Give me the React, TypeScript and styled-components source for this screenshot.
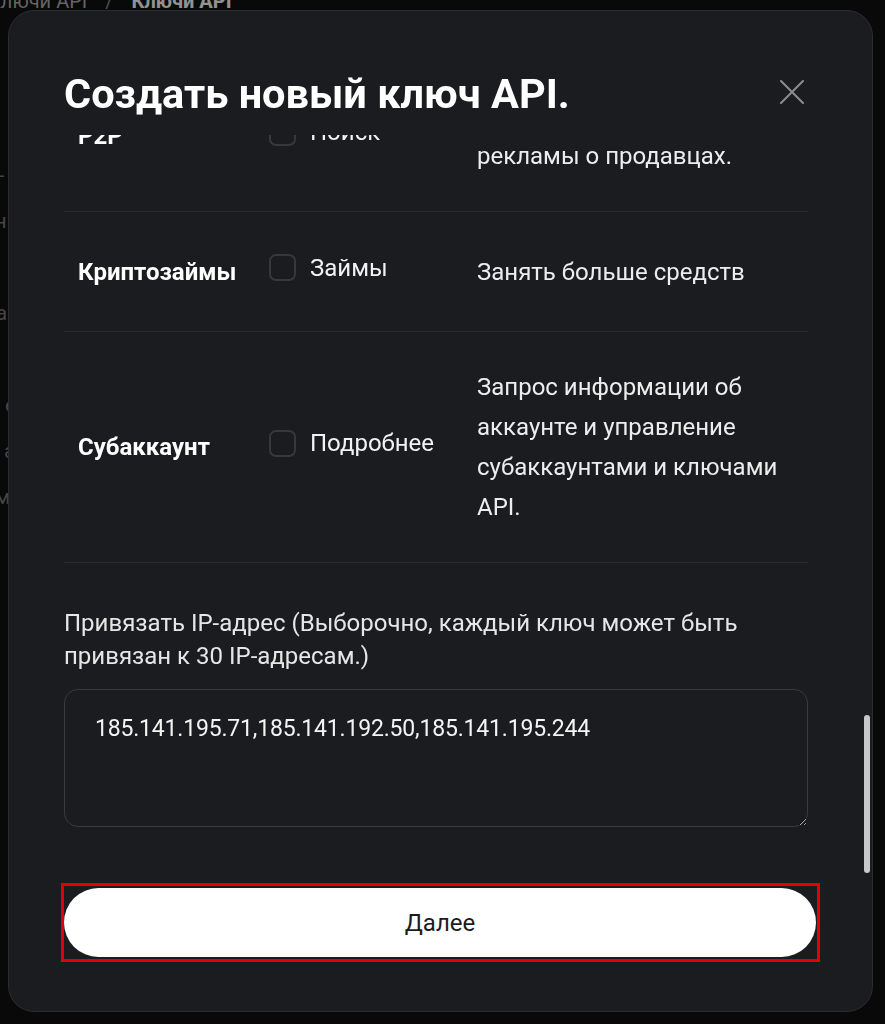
import React from "react";
import styled, { createGlobalStyle } from "styled-components";

const GlobalStyle = createGlobalStyle`
  html, body {
    margin: 0;
    padding: 0;
    background: #0e0e0f;
    color-scheme: dark;
  }
  body {
    font-family: Roboto, "Noto Sans", sans-serif;
    -webkit-font-smoothing: antialiased;
  }
`;

type Permission = {
  title: string;
  option: string;
  text: React.ReactNode;
};

const permissions: Permission[] = [
  {
    title: "P2P",
    option: "Поиск",
    text: (
      <>
        Просмотр объявлений и<br />
        рекламы о продавцах.
      </>
    ),
  },
  { title: "Криптозаймы", option: "Займы", text: "Занять больше средств" },
  {
    title: "Субаккаунт",
    option: "Подробнее",
    text: "Запрос информации об аккаунте и управление субаккаунтами и ключами API.",
  },
];

const backLines = [
  "Ограничения по IP-адресам для ключей API",
  "Выберите разрешения для вашего ключа API",
  "Чтение ",
  "Торговля спот и маржинальная торговля",
  "Деривативы и бессрочные контракты",
  "Доступ к вашим средствам на балансе",
  "Вывод средств ограничен белым списком",
  "Управление ключами и субаккаунтами",
];

export default function App() {
  return (
    <>
      <GlobalStyle />
      <Page>
        <Breadcrumb>
          <span>Ключи API</span>
          <Sep>/</Sep>
          <b>Ключи API</b>
        </Breadcrumb>
        <BackList>
          {backLines.map((l, i) => (
            <BackLine key={i}>{l}</BackLine>
          ))}
        </BackList>
      </Page>

      <Backdrop>
        <Modal>
          <Header>
            <Title>Создать новый ключ API.</Title>
            <Close aria-label="Закрыть">
              <svg width="24" height="24" viewBox="0 0 24 24">
                <path
                  d="M1 1L23 23M23 1L1 23"
                  stroke="#8b8c8f"
                  strokeWidth="2"
                  strokeLinecap="round"
                />
              </svg>
            </Close>
          </Header>

          <Body>
            {permissions.map((p) => (
              <Row key={p.title}>
                <RowTitle>{p.title}</RowTitle>
                <Check>
                  <Box />
                  <span>{p.option}</span>
                </Check>
                <RowText>{p.text}</RowText>
              </Row>
            ))}

            <IpLabel>
              Привязать IP-адрес (Выборочно, каждый ключ может быть привязан к 30
              IP-адресам.)
            </IpLabel>
            <IpArea
              readOnly
              value="185.141.195.71,185.141.192.50,185.141.195.244"
            />
          </Body>

          <Footer>
            <Highlight>
              <NextButton>Далее</NextButton>
            </Highlight>
          </Footer>

          <Thumb />
        </Modal>
      </Backdrop>
    </>
  );
}

const Page = styled.div`
  height: 1024px;
  overflow: hidden;
  color: #6a6a6a;
`;
const Breadcrumb = styled.div`
  display: flex;
  gap: 18px;
  margin: -11px 0 0 -12px;
  font-size: 20px;
  color: #9a9a9a;
  b {
    color: #e0e0e0;
  }
`;
const Sep = styled.span`
  color: #777;
`;
const BackList = styled.div`
  display: flex;
  flex-direction: column;
  gap: 22px;
  margin-top: 150px;
`;
const BackLine = styled.div`
  font-size: 21px;
  white-space: nowrap;
  margin-left: -320px;
  letter-spacing: 8px;
`;

const Backdrop = styled.div`
  position: fixed;
  inset: 0;
  background: rgba(0, 0, 0, 0.35);
  display: flex;
`;
const Modal = styled.div`
  position: relative;
  box-sizing: border-box;
  margin: 10px 12px 12px 8px;
  flex: 1;
  display: flex;
  flex-direction: column;
  background: #1b1c1f;
  border: 1px solid #2c2d31;
  border-radius: 26px;
  overflow: hidden;
`;
const Header = styled.div`
  flex: none;
  height: 124px;
  box-sizing: border-box;
  padding: 59px 68px 0 55px;
  display: flex;
  justify-content: space-between;
  align-items: flex-start;
`;
const Title = styled.h2`
  margin: 0;
  font-size: 41.5px;
  line-height: 48px;
  font-weight: 700;
  color: #ffffff;
`;
const Close = styled.button`
  margin-top: 10px;
  padding: 0;
  border: 0;
  background: none;
  width: 24px;
  height: 24px;
  cursor: pointer;
`;
const Body = styled.div`
  flex: 1;
  min-height: 0;
  overflow: hidden;
  display: flex;
  flex-direction: column;
  justify-content: flex-end;
  padding: 0 64px 45px 55px;
`;
const Row = styled.div`
  flex: none;
  display: grid;
  grid-template-columns: 191px 208px 1fr;
  align-items: center;
  min-height: 120px;
  box-sizing: border-box;
  padding: 35px 0 35px 14px;
  border-bottom: 1px solid #2b2c30;
`;
const RowTitle = styled.div`
  font-size: 24px;
  font-weight: 700;
  color: #ffffff;
`;
const Check = styled.label`
  display: flex;
  align-items: center;
  gap: 14px;
  margin-bottom: 8px;
  font-size: 24px;
  color: #f2f2f2;
`;
const Box = styled.span`
  flex: none;
  width: 27px;
  height: 27px;
  box-sizing: border-box;
  border: 2px solid #37383c;
  border-radius: 7px;
`;
const RowText = styled.div`
  font-size: 24px;
  line-height: 40px;
  color: #ededed;
`;
const IpLabel = styled.div`
  flex: none;
  margin-top: 44px;
  font-size: 24px;
  line-height: 33px;
  color: #e6e6e6;
`;
const IpArea = styled.textarea`
  flex: none;
  margin-top: 16px;
  height: 138px;
  box-sizing: border-box;
  padding: 22px 30px;
  background: transparent;
  border: 1.5px solid #3a3b3f;
  border-radius: 14px;
  font-family: Roboto, "Noto Sans", sans-serif;
  font-size: 23px;
  letter-spacing: -0.18px;
  line-height: 34px;
  color: #f4f4f4;
  outline: none;
  resize: vertical;
`;
const Footer = styled.div`
  flex: none;
  padding: 11px 52px 49px 52px;
`;
const Highlight = styled.div`
  border: 3px solid #e20000;
  padding: 2px 1px 2px 0;
`;
const NextButton = styled.button`
  display: block;
  width: 100%;
  height: 69px;
  border: 0;
  border-radius: 35px;
  background: #ffffff;
  font-family: Roboto, "Noto Sans", sans-serif;
  font-size: 24px;
  font-weight: 400;
  color: #1b1c1f;
  cursor: pointer;
`;
const Thumb = styled.div`
  position: absolute;
  top: 704px;
  right: 2px;
  width: 6px;
  height: 158px;
  border-radius: 3px;
  background: #c6c8cb;
`;
